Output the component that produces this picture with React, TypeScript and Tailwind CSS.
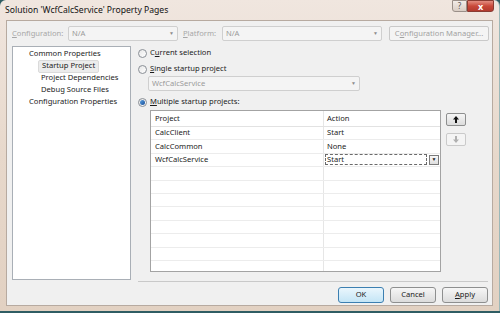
import type { ReactNode } from "react";

const font = { fontFamily: '"Noto Sans", "Open Sans", Arial, sans-serif' };

// little radio like the vista one
function Radio({ checked, children }: { checked?: boolean; children: ReactNode }) {
  return (
    <div className="flex items-center h-[12px] whitespace-nowrap">
      <span className="relative w-[9px] h-[9px] rounded-full border border-[#8a8f96] bg-gradient-to-br from-[#e6e6e6] to-[#ffffff] flex items-center justify-center">
        {checked && (
          <span className="w-[5px] h-[5px] rounded-full bg-gradient-to-br from-[#5aa0e0] to-[#1a4f9a]" />
        )}
      </span>
      <span className="ml-[3px] text-[#1b1b1b]">{children}</span>
    </div>
  );
}

function Combo({ width, text }: { width: string; text: string }) {
  return (
    <div
      className={`${width} h-[15px] border border-[#cfcfcf] bg-[#f4f4f4] rounded-[2px] flex items-center justify-between pl-[3px] pr-[3px] text-[#9a9a9a] whitespace-nowrap`}
    >
      <span>{text}</span>
      <span className="text-[5px] text-[#8c8c8c]">▼</span>
    </div>
  );
}

function Btn({ children, def, w = "w-[46px]" }: { children: ReactNode; def?: boolean; w?: string }) {
  return (
    <div
      className={`${w} h-[16px] rounded-[3px] border flex items-center justify-center bg-gradient-to-b text-[#1b1b1b] ${
        def ? "border-[#3c7fb1] from-[#eaf6fd] to-[#c4e5f6]" : "border-[#8e8f8f] from-[#f6f6f6] to-[#dcdcdc]"
      }`}
    >
      {children}
    </div>
  );
}

const rows = [
  { name: "CalcClient", action: "Start" },
  { name: "CalcCommon", action: "None" },
  { name: "WcfCalcService", action: "Start", edit: true },
  { name: "", action: "" },
  { name: "", action: "" },
  { name: "", action: "" },
  { name: "", action: "" },
  { name: "", action: "" },
  { name: "", action: "" },
  { name: "", action: "" },
  { name: "", action: "" },
];

export default function App() {
  return (
    <div
      className="w-[500px] h-[313px] overflow-hidden bg-[#2f5d63] text-[7.6px] leading-none"
      style={font}
    >
      <div className="w-[500px] h-[311px] bg-gradient-to-b from-[#f0e6df] via-[#e7d8cb] to-[#e2d1c2] rounded-t-[6px] flex flex-col border-r border-[#9bb8b8]">
        {/* title bar */}
        <div className="relative h-[20px] flex items-center pl-[5px] pt-[1px] text-[8.6px] text-[#111] whitespace-nowrap">
          <span>Solution 'WcfCalcService' Property Pages</span>
          <div className="absolute top-0 right-[5px] flex">
            <div className="w-[15px] h-[12px] border border-[#9a8f88] rounded-bl-[3px] bg-gradient-to-b from-[#f2ece8] to-[#d9cdc4] flex items-center justify-center text-[8px] text-[#555]">
              ?
            </div>
            <div className="w-[27px] h-[12px] border border-[#8a3b32] rounded-br-[3px] bg-gradient-to-b from-[#e28c80] via-[#c9483a] to-[#b23a2e] flex items-center justify-center text-[9px] font-bold text-white">
              x
            </div>
          </div>
        </div>

        {/* client area */}
        <div className="mx-[6px] h-[286px] bg-[#f0f0f0] border border-[#b7aaa0] flex flex-col pt-[5px] pl-[5px]">
          {/* configuration row */}
          <div className="flex items-center h-[15px] whitespace-nowrap">
            <span className="w-[56px] text-[#a7a7a7]">
              <u>C</u>onfiguration:
            </span>
            <Combo width="w-[110px]" text="N/A" />
            <span className="ml-[5px] w-[39px] text-[#a7a7a7]">
              <u>P</u>latform:
            </span>
            <Combo width="w-[160px]" text="N/A" />
            <div className="ml-[7px] w-[100px] h-[15px] border border-[#c9c9c9] rounded-[2px] bg-[#f4f4f4] flex items-center justify-center text-[#a2a2a2]">
              C<u>o</u>nfiguration Manager...
            </div>
          </div>

          {/* main area */}
          <div className="flex mt-[5px] h-[236px]">
            {/* tree */}
            <div className="w-[119px] h-[234px] bg-white border border-[#a9afb6] pt-[1px] text-[#1b1b1b] whitespace-nowrap">
              <div className="h-[12px] flex items-center pl-[16px]">Common Properties</div>
              <div className="h-[12px] flex items-center pl-[25px]">
                <span className="px-[3px] h-[13px] flex items-center bg-[#ececec] border border-[#dadada] rounded-[2px]">
                  Startup Project
                </span>
              </div>
              <div className="h-[12px] flex items-center pl-[28px]">Project Dependencies</div>
              <div className="h-[12px] flex items-center pl-[28px]">Debug Source Files</div>
              <div className="h-[12px] flex items-center pl-[16px]">Configuration Properties</div>
            </div>

            {/* right panel */}
            <div className="ml-[7px] w-[350px] flex flex-col border-b border-[#c9c9c9] h-[236px] pt-[1px]">
              <Radio>
                C<u>u</u>rrent selection
              </Radio>
              <div className="mt-[4px]">
                <Radio>
                  <u>S</u>ingle startup project
                </Radio>
              </div>
              <div className="mt-[1px] ml-[10px]">
                <Combo width="w-[212px]" text="WcfCalcService" />
              </div>
              <div className="mt-[5px]">
                <Radio checked>
                  <u>M</u>ultiple startup projects:
                </Radio>
              </div>

              <div className="flex mt-[2px] ml-[12px]">
                {/* grid */}
                <div className="w-[291px] h-[162px] bg-white border border-[#a3a3a3] overflow-hidden text-[#1b1b1b] whitespace-nowrap">
                  <div className="flex h-[16px] border-b border-[#e2e2e2]">
                    <div className="w-[173px] pl-[4px] flex items-center border-r border-[#e6e6e6]">Project</div>
                    <div className="flex-1 pl-[3px] flex items-center">Action</div>
                  </div>
                  {rows.map((r, i) => (
                    <div key={i} className="flex h-[13.4px] border-b border-[#ececec]">
                      <div className="w-[173px] pl-[4px] flex items-center border-r border-[#e6e6e6]">{r.name}</div>
                      <div className="flex-1 flex items-center pl-[3px]">
                        {r.edit ? (
                          <div className="flex items-center -ml-[2px]">
                            <div className="w-[102px] h-[11px] border border-dashed border-[#6a6a6a] flex items-center pl-[1px]">
                              {r.action}
                            </div>
                            <div className="ml-[2px] w-[10px] h-[10px] border border-[#7a7a7a] bg-gradient-to-b from-[#f8f8f8] to-[#dedede] flex items-center justify-center text-[5px] text-[#222]">
                              ▼
                            </div>
                          </div>
                        ) : (
                          r.action
                        )}
                      </div>
                    </div>
                  ))}
                </div>

                {/* move buttons */}
                <div className="ml-[5px] mt-[3px] flex flex-col gap-[7px]">
                  <div className="w-[20px] h-[13px] rounded-[2px] border border-[#8e8f8f] bg-gradient-to-b from-[#f6f6f6] to-[#dcdcdc] flex items-center justify-center">
                    <svg width="6" height="7" viewBox="0 0 6 7">
                      <path d="M3 0 L6 3.5 H4 V7 H2 V3.5 H0 Z" fill="#111" />
                    </svg>
                  </div>
                  <div className="w-[20px] h-[13px] rounded-[2px] border border-[#cacaca] bg-[#f4f4f4] flex items-center justify-center">
                    <svg width="6" height="7" viewBox="0 0 6 7">
                      <path d="M3 7 L6 3.5 H4 V0 H2 V3.5 H0 Z" fill="#b0b0b0" />
                    </svg>
                  </div>
                </div>
              </div>
            </div>
          </div>

          {/* bottom buttons */}
          <div className="flex justify-end gap-[6px] pr-[4px] mt-[5px]">
            <Btn def>OK</Btn>
            <Btn>Cancel</Btn>
            <Btn>
              <u>A</u>pply
            </Btn>
          </div>
        </div>
      </div>
    </div>
  );
}
